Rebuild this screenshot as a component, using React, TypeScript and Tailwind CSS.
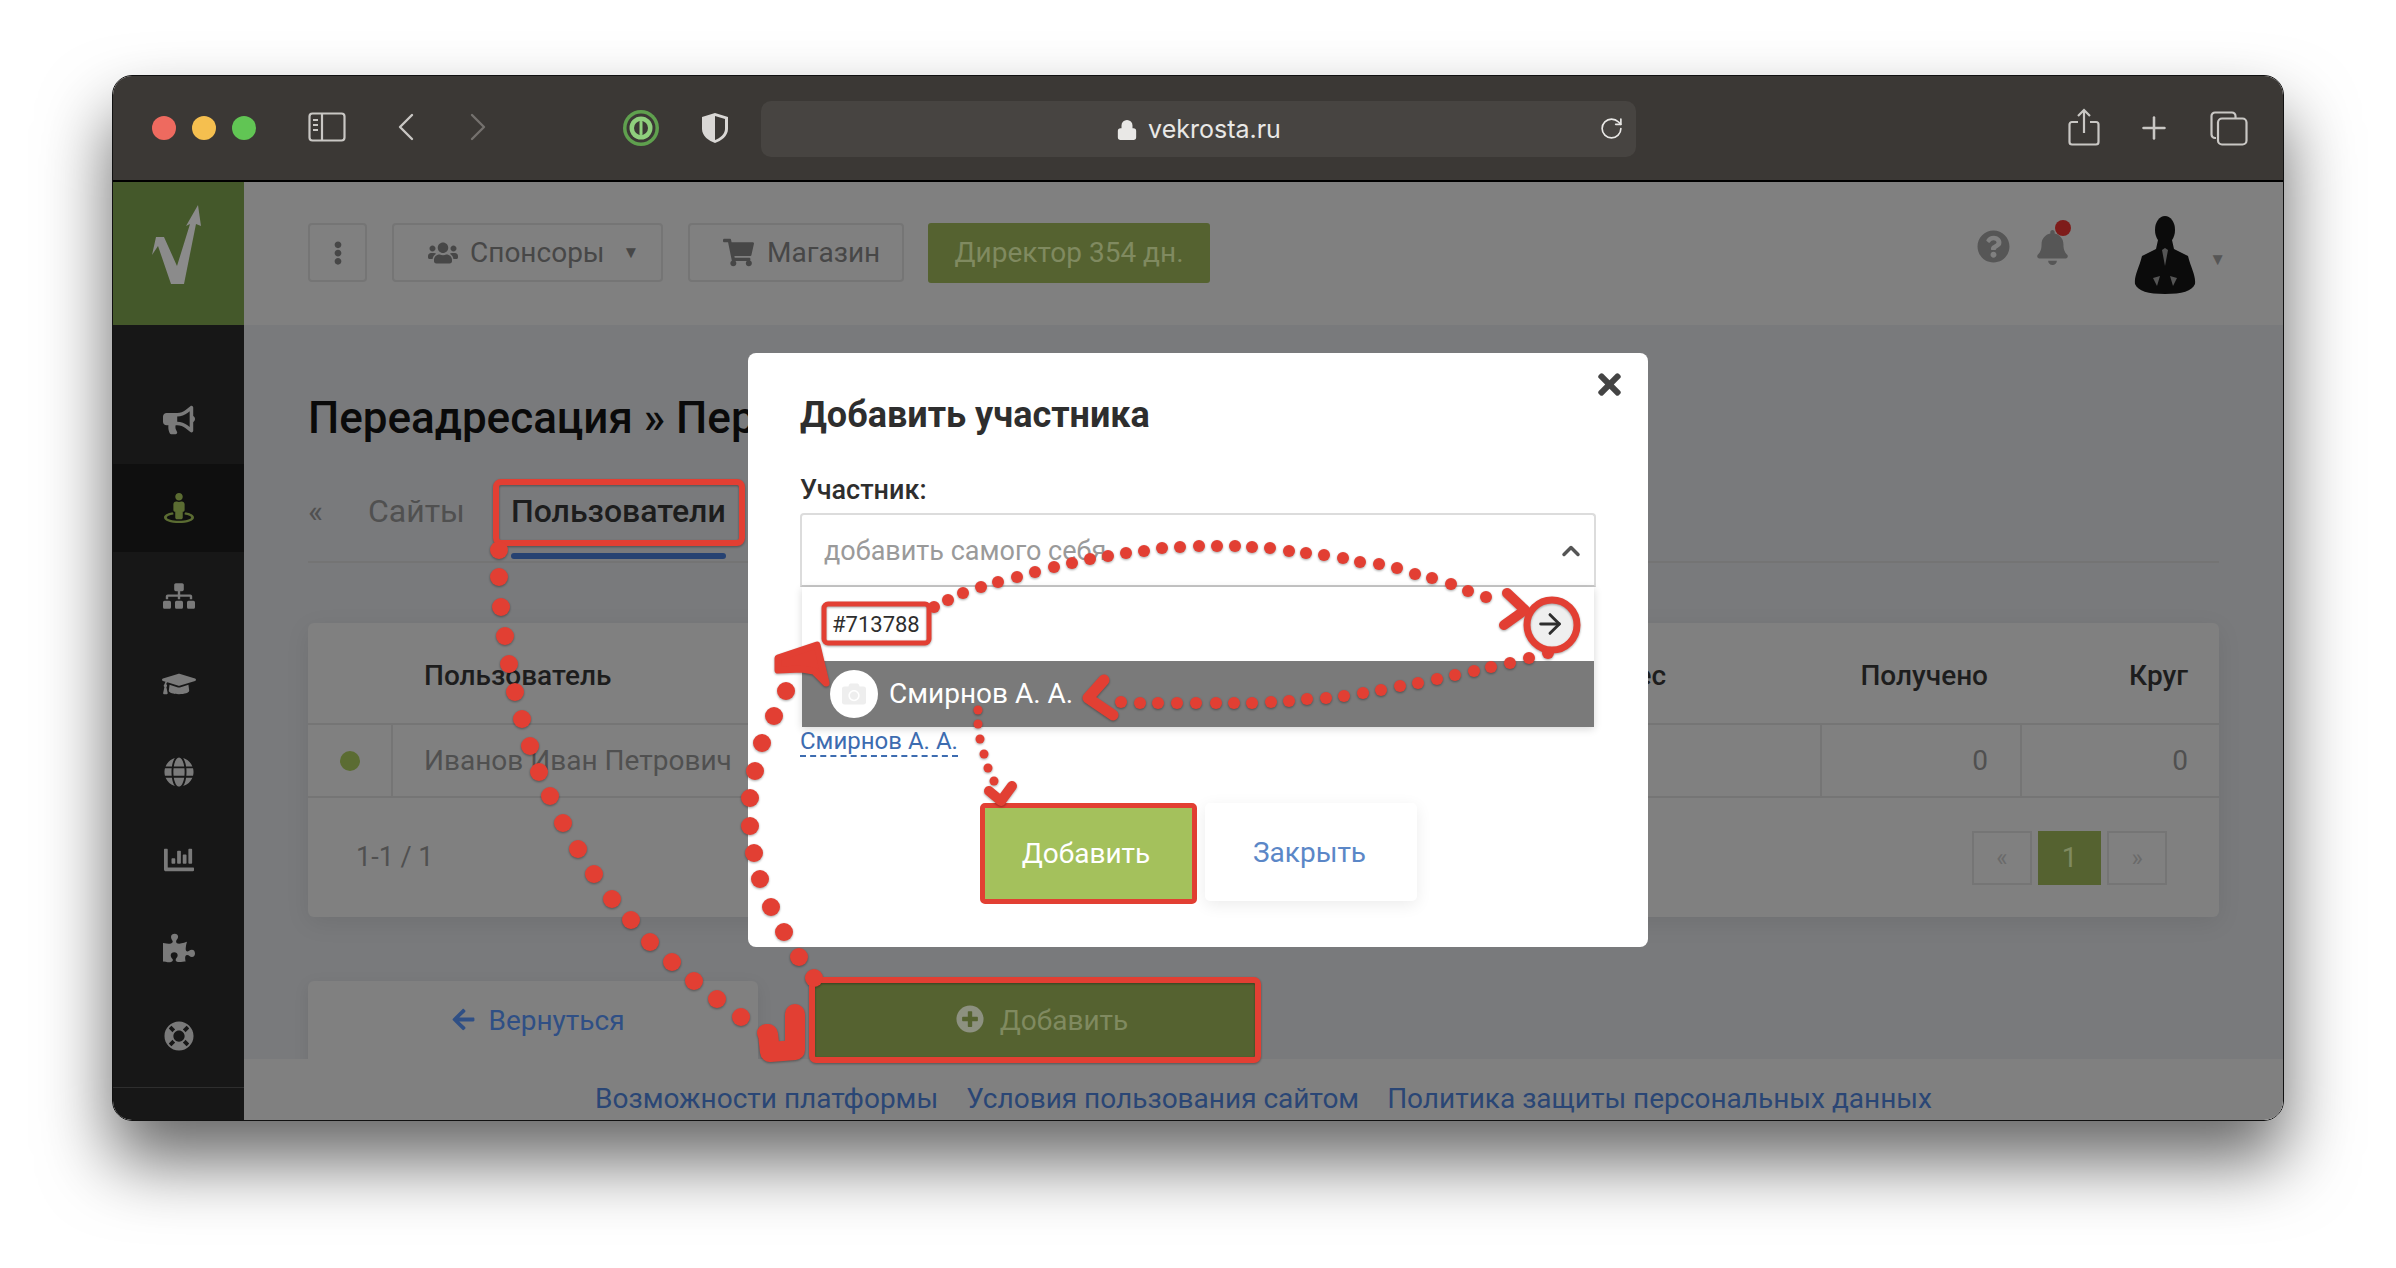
import { ArrowRight, ChevronUp, Lock, Plus, RotateCw } from "lucide-react";
import {
  FaArrowLeft,
  FaBell,
  FaBullhorn,
  FaCamera,
  FaChartBar,
  FaEllipsisV,
  FaGlobe,
  FaGraduationCap,
  FaLifeRing,
  FaPlusCircle,
  FaPuzzlePiece,
  FaQuestionCircle,
  FaShoppingCart,
  FaSitemap,
  FaStreetView,
  FaTimes,
  FaUsers,
} from "react-icons/fa";

const sidebarIcons = [
  { Icon: FaBullhorn, size: 32 },
  { Icon: FaStreetView, size: 30, active: true },
  { Icon: FaSitemap, size: 32 },
  { Icon: FaGraduationCap, size: 34 },
  { Icon: FaGlobe, size: 30 },
  { Icon: FaChartBar, size: 30 },
  { Icon: FaPuzzlePiece, size: 32 },
  { Icon: FaLifeRing, size: 30 },
];

// dotted annotation routes, page coordinates
const bigDots = [
  [499, 550], [499, 577], [501, 607], [505, 636], [509, 664], [515, 692], [522, 719], [530, 746], [539, 772],
  [550, 796], [563, 823], [578, 849], [594, 874], [612, 899], [631, 920], [650, 942], [672, 962], [694, 981],
  [717, 999], [741, 1017], [766, 1033],
  [814, 978], [799, 957], [784, 932], [771, 907], [760, 879], [754, 853], [750, 826], [750, 798], [755, 771],
  [762, 743], [774, 716], [786, 691],
];
const midDots = [
  [934, 607], [948, 600], [963, 593], [981, 587], [998, 582], [1017, 577], [1035, 572], [1054, 567], [1072, 563],
  [1090, 559], [1108, 556], [1126, 553], [1144, 551], [1162, 548], [1180, 547], [1199, 546], [1217, 546], [1235, 546],
  [1252, 547], [1270, 548], [1289, 551], [1306, 553], [1324, 555], [1343, 558], [1360, 562], [1379, 564], [1397, 568],
  [1415, 574], [1432, 578], [1451, 584], [1468, 591], [1486, 597],
  [1548, 653], [1529, 658], [1510, 663], [1491, 667], [1474, 671], [1455, 675], [1437, 679], [1418, 683], [1400, 686],
  [1381, 690], [1363, 693], [1344, 696], [1326, 698], [1307, 699], [1289, 701], [1271, 702], [1252, 703], [1234, 703],
  [1216, 703], [1196, 703], [1177, 703], [1158, 703], [1140, 703], [1121, 702],
];
const smallDots = [
  [978, 710], [978, 724], [980, 739], [984, 754], [988, 768], [994, 781],
];

function Annotations() {
  const red = "#e23f33";
  return (
    <svg
      className="pointer-events-none absolute left-0 top-0 drop-shadow-[0_1px_1px_rgba(0,0,0,0.35)]"
      width="2396"
      height="1268"
      viewBox="0 0 2396 1268"
    >
      <rect x="496" y="482" width="246" height="61" rx="5" fill="none" stroke={red} strokeWidth="6" />
      <rect x="812" y="980" width="446" height="80" rx="4" fill="none" stroke={red} strokeWidth="6" />
      <rect x="824" y="604" width="105" height="39" rx="4" fill="none" stroke={red} strokeWidth="5" />
      <circle cx="1552" cy="625" r="25" fill="none" stroke={red} strokeWidth="7" />
      {bigDots.map(([x, y], i) => (
        <circle key={i} cx={x} cy={y} r="9" fill={red} />
      ))}
      {midDots.map(([x, y], i) => (
        <circle key={i} cx={x} cy={y} r="6" fill={red} />
      ))}
      {smallDots.map(([x, y], i) => (
        <circle key={i} cx={x} cy={y} r="4.5" fill={red} />
      ))}
      <g fill="none" stroke={red} strokeLinecap="round" strokeLinejoin="round">
        <path d="M1507 593 L1525 610 L1504 625" strokeWidth="10" />
        <path d="M1104 680 L1088 698 L1113 715" strokeWidth="11" />
        <path d="M989 791 L1001 801 L1012 786" strokeWidth="10" />
        <path d="M795 1014 L795 1050 L770 1052 L768 1034" strokeWidth="20" />
        <path d="M778 658 L817 645 L826 683 L814 671 L802 669 L778 670 Z" fill={red} strokeWidth="7" />
      </g>
    </svg>
  );
}

function Logo() {
  return (
    <svg className="ml-[-5px]" width="54" height="84" viewBox="0 0 54 84" fill="#8b8b8b">
      <path d="M49 3 L52 24 L47 22 L35 82 L22 82 L9 44 L3 53 L7 35 L15 35 L28 64 L41 22 L37 24 Z" />
    </svg>
  );
}

function Avatar() {
  return (
    <svg width="62" height="78" viewBox="0 0 62 78" fill="#0b0b0b">
      <ellipse cx="31" cy="14" rx="10" ry="14" />
      <path d="M24 24 H38 L40 33 L54 40 C57 52 62 60 61 68 C58 75 48 78 31 78 C14 78 4 75 1 68 C0 60 5 52 8 40 L22 33 Z" />
      <path d="M28 34 L31 50 L34 34 L31 32 Z" fill="#555" />
      <path d="M19 62 L23 70 L26 60 Z M43 62 L39 70 L36 60 Z" fill="#555" />
    </svg>
  );
}

function Toolbar() {
  return (
    <div className="flex h-[106px] shrink-0 items-start border-b-2 border-black bg-[#3b3835] pt-[25px] text-[#c9c7c4]">
      <div className="ml-[39px] mt-[15px] flex w-[104px] items-center justify-between">
        <span className="h-[24px] w-[24px] rounded-full bg-[#ee6a5f]" />
        <span className="h-[24px] w-[24px] rounded-full bg-[#f5bf4f]" />
        <span className="h-[24px] w-[24px] rounded-full bg-[#61c554]" />
      </div>
      <svg className="ml-[52px] mt-[11px]" width="38" height="30" viewBox="0 0 38 30" fill="none" stroke="currentColor" strokeWidth="2.2">
        <rect x="1.5" y="1.5" width="35" height="27" rx="3" />
        <path d="M14 2 V28 M5 8 H10 M5 13 H10 M5 18 H10" />
      </svg>
      <svg className="ml-[52px] mt-[12px]" width="16" height="28" viewBox="0 0 16 28" fill="none" stroke="currentColor" strokeWidth="2.4" strokeLinecap="round" strokeLinejoin="round">
        <path d="M14 2 L2 14 L14 26" />
      </svg>
      <svg className="ml-[56px] mt-[12px] text-[#74716e]" width="16" height="28" viewBox="0 0 16 28" fill="none" stroke="currentColor" strokeWidth="2.4" strokeLinecap="round" strokeLinejoin="round">
        <path d="M2 2 L14 14 L2 26" />
      </svg>
      <svg className="ml-[136px] mt-[8px]" width="38" height="38" viewBox="0 0 38 38" fill="none">
        <circle cx="19" cy="19" r="18" fill="#5fa04e" />
        <circle cx="19" cy="19" r="14.5" fill="#3b3835" />
        <circle cx="19" cy="19" r="11.5" fill="#8fcf7d" />
        <circle cx="19" cy="19" r="7" fill="#3b3835" />
        <rect x="17.5" y="12" width="3" height="14" rx="1" fill="#8fcf7d" />
      </svg>
      <svg className="ml-[41px] mt-[11px]" width="28" height="32" viewBox="0 0 28 32">
        <path d="M14 1 L27 5 V17 C27 24 20 29 14 31 C8 29 1 24 1 17 V5 Z" fill="#d9d7d5" />
        <path d="M14 4 L24 7 V17 C24 22 19 26 14 28 Z" fill="#3b3835" />
      </svg>
      <div className="relative ml-[32px] flex h-[56px] w-[875px] items-center justify-center rounded-[10px] bg-[#474441] pt-[2px] font-['Inter',sans-serif] text-[25px] text-[#e9e8e6]">
        <Lock className="mr-[10px]" size={22} fill="currentColor" strokeWidth={2} />
        vekrosta.ru
        <RotateCw className="absolute right-[12px] top-[15px]" size={25} strokeWidth={1.6} />
      </div>
      <svg className="ml-[432px] mt-[7px]" width="32" height="38" viewBox="0 0 32 38" fill="none" stroke="currentColor" strokeWidth="2.2">
        <path d="M10 14 H4 A2.5 2.5 0 0 0 1.5 16.5 V34 A2.5 2.5 0 0 0 4 36.5 H28 A2.5 2.5 0 0 0 30.5 34 V16.5 A2.5 2.5 0 0 0 28 14 H22" />
        <path d="M16 25 V2 M10 8 L16 2 L22 8" />
      </svg>
      <Plus className="ml-[36px] mt-[9px]" size={36} strokeWidth={1.7} />
      <svg className="ml-[38px] mt-[10px]" width="38" height="35" viewBox="0 0 38 35" fill="none" stroke="currentColor" strokeWidth="2.2">
        <path d="M6 27 H5 A3.5 3.5 0 0 1 1.5 23.5 V5 A3.5 3.5 0 0 1 5 1.5 H22 A3.5 3.5 0 0 1 25.5 5 V7" />
        <rect x="8" y="7.5" width="28.5" height="26" rx="4" />
      </svg>
    </div>
  );
}

function Sidebar() {
  return (
    <aside className="flex w-[131px] shrink-0 flex-col bg-[#171717]">
      <div className="flex h-[143px] items-start justify-center bg-[#44582a] pt-[20px]">
        <Logo />
      </div>
      <nav className="flex flex-col pt-[51px]">
        {sidebarIcons.map(({ Icon, size, active }, i) => (
          <div
            key={i}
            className={
              active
                ? "flex h-[88px] items-center justify-center bg-[#0f0f0f] text-[#5b6c32]"
                : "flex h-[88px] items-center justify-center text-[#7a7a7a]"
            }
          >
            <Icon size={size} />
          </div>
        ))}
      </nav>
      <div className="mt-[7px] border-t border-[#2e2e2e]" />
    </aside>
  );
}

function TopBar() {
  return (
    <header className="flex h-[143px] shrink-0 items-start bg-[#808080] pl-[64px] pr-[57px] pt-[41px] text-[28px] text-[#474747]">
      <div className="flex h-[59px] w-[59px] items-center justify-center rounded-[4px] border-2 border-[#757575]">
        <FaEllipsisV size={24} />
      </div>
      <div className="ml-[25px] flex h-[59px] w-[271px] items-center rounded-[4px] border-2 border-[#757575] pl-[34px]">
        <FaUsers size={30} />
        <span className="ml-[12px]">Спонсоры</span>
        <span className="ml-[18px] text-[17px]">▼</span>
      </div>
      <div className="ml-[25px] flex h-[59px] w-[216px] items-center rounded-[4px] border-2 border-[#757575] pl-[33px]">
        <FaShoppingCart size={31} />
        <span className="ml-[13px]">Магазин</span>
      </div>
      <div className="ml-[24px] flex h-[60px] w-[282px] items-center justify-center rounded-[3px] bg-[#556230] text-[#808a60]">
        Директор 354 дн.
      </div>
      <FaQuestionCircle className="ml-auto mt-[7px] text-[#565656]" size={33} />
      <div className="relative ml-[25px] mt-[7px]">
        <FaBell className="text-[#565656]" size={35} />
        <span className="absolute left-[20px] top-[-10px] h-[16px] w-[16px] rounded-full bg-[#7e1c1a]" />
      </div>
      <div className="ml-[64px] mt-[-7px]">
        <Avatar />
      </div>
      <span className="ml-[13px] mt-[24px] text-[17px] text-[#565656]">▼</span>
    </header>
  );
}

function UsersTable() {
  return (
    <section className="mt-[60px] h-[294px] rounded-[6px] bg-[#808080] shadow-[0_6px_24px_rgba(0,0,0,0.08)]">
      <div className="grid h-[100px] grid-cols-[83px_1170px_259px_200px_201px] items-center pt-[6px] text-[28px] font-medium text-[#1d1d1d]">
        <div />
        <div className="pl-[33px]">Пользователь</div>
        <div className="pl-[24px]">Адрес</div>
        <div className="pr-[32px] text-right">Получено</div>
        <div className="pr-[33px] text-right">Круг</div>
      </div>
      <div className="grid h-[75px] grid-cols-[83px_1170px_259px_200px_201px] border-y-2 border-[#757575] text-[28px] text-[#505050]">
        <div className="flex items-center justify-center">
          <span className="h-[20px] w-[20px] rounded-full bg-[#5b6c32]" />
        </div>
        <div className="flex items-center border-l-2 border-[#757575] pl-[31px]">Иванов Иван Петрович</div>
        <div />
        <div className="flex items-center justify-end border-l-2 border-[#757575] pr-[32px]">0</div>
        <div className="flex items-center justify-end border-l-2 border-[#757575] pr-[33px]">0</div>
      </div>
      <div className="flex h-[119px] items-start justify-between pl-[48px] pr-[52px] pt-[33px] text-[27px] text-[#505050]">
        <span className="mt-[6px]">1-1 / 1</span>
        <div className="flex gap-[6px] text-[24px]">
          <span className="flex h-[54px] w-[60px] items-center justify-center border-2 border-[#757575] text-[#6a6a6a]">«</span>
          <span className="flex h-[54px] w-[63px] items-center justify-center bg-[#556230] text-[28px] text-[#808a60]">1</span>
          <span className="flex h-[54px] w-[60px] items-center justify-center border-2 border-[#757575] text-[#6a6a6a]">»</span>
        </div>
      </div>
    </section>
  );
}

function PageBody() {
  return (
    <main className="min-h-0 flex-1 overflow-hidden bg-[#797a7c] px-[64px] pt-[69px]">
      <h1 className="text-[44px] font-medium leading-[48px] text-[#0a0a0a]">Переадресация » Переадресация</h1>
      <div className="mt-[39px] flex h-[82px] items-start border-b-2 border-[#747474] pt-[10px] text-[32px] leading-[40px]">
        <span className="text-[#505050]">«</span>
        <span className="ml-[45px] text-[#505050]">Сайты</span>
        <span className="ml-[46px] flex h-[72px] flex-col font-medium text-[#1d1d1d]">
          Пользователи
          <span className="mt-[22px] h-[6px] rounded-[3px] bg-[#264272]" />
        </span>
      </div>
      <UsersTable />
      <div className="mt-[64px] flex h-[90px] gap-[56px] text-[28px]">
        <button className="flex h-full w-[450px] items-start justify-center rounded-[6px] bg-[#808080] pl-[10px] pt-[19px] text-[#2f4f85] shadow-[0_4px_16px_rgba(0,0,0,0.08)]">
          <FaArrowLeft className="mr-[12px] mt-[7px]" size={25} />
          Вернуться
        </button>
        <button className="flex h-full w-[442px] items-start justify-center bg-[#556230] pl-[14px] pt-[19px] text-[#808a60]">
          <FaPlusCircle className="mr-[16px] mt-[5px] text-[#8d9180]" size={28} />
          Добавить
        </button>
      </div>
    </main>
  );
}

function AddMemberModal() {
  return (
    <div className="absolute left-[748px] top-[353px] h-[594px] w-[900px] rounded-[8px] bg-white px-[52px] pt-[42px]">
      <FaTimes className="absolute right-[22px] top-[15px] text-[#444]" size={33} />
      <h2 className="text-[36px] font-bold leading-[40px] text-[#2e2e2e]">Добавить участника</h2>
      <div className="mt-[39px] text-[27px] font-medium leading-[32px] text-[#2e2e2e]">Участник:</div>
      <div className="mt-[7px] flex h-[74px] items-center justify-between rounded-t-[4px] border-2 border-[#dcdcdc] border-b-[#c8c8c8] pl-[22px] pr-[9px] pt-[2px] text-[27px] text-[#9a9a9a]">
        добавить самого себя
        <ChevronUp className="text-[#555]" size={28} strokeWidth={3} />
      </div>
      <div className="mx-[2px] shadow-[0_2px_8px_rgba(0,0,0,0.16)]">
        <div className="flex h-[74px] items-center justify-between pl-[30px] pr-[21px] text-[22px] text-[#2e2e2e]">
          #713788
          <span className="flex h-[46px] w-[46px] items-center justify-center rounded-full bg-[#efefef]">
            <ArrowRight size={32} strokeWidth={2.2} />
          </span>
        </div>
        <div className="flex h-[66px] items-center bg-[#7a7a7a] pl-[28px] text-[28px] text-white">
          <span className="flex h-[48px] w-[48px] items-center justify-center rounded-full bg-white">
            <FaCamera className="text-[#eeeeee]" size={24} />
          </span>
          <span className="ml-[11px]">Смирнов А. А.</span>
        </div>
      </div>
      <a className="inline-block border-b-2 border-dashed border-[#3d6cb0] text-[24px] leading-[28px] text-[#3d6cb0]">Смирнов А. А.</a>
      <div className="mt-[46px] flex items-start justify-center gap-[8px] text-[28px]">
        <button className="h-[101px] w-[217px] rounded-[5px] border-[5px] border-[#e23f33] bg-[#a4c15c] pr-[4px] text-white">Добавить</button>
        <button className="h-[98px] w-[212px] rounded-[5px] bg-white pr-[2px] pt-[2px] text-[#5b87c7] shadow-[0_4px_16px_rgba(0,0,0,0.08)]">Закрыть</button>
      </div>
    </div>
  );
}

export default function App() {
  return (
    <div className="relative h-[1268px] w-[2396px] overflow-hidden bg-white pl-[112px] pt-[75px] font-['Roboto',sans-serif]">
      <div className="flex h-[1046px] w-[2172px] flex-col overflow-hidden rounded-[20px] border border-[#111] shadow-[0_40px_70px_rgba(0,0,0,0.6)]">
        <Toolbar />
        <div className="flex min-h-0 flex-1">
          <Sidebar />
          <div className="flex min-w-0 flex-1 flex-col">
            <TopBar />
            <PageBody />
            <footer className="flex h-[61px] shrink-0 items-center justify-center gap-[28px] bg-[#808080] pt-[18px] text-[28px] text-[#2a4675]">
              <span>Возможности платформы</span>
              <span>Условия пользования сайтом</span>
              <span>Политика защиты персональных данных</span>
            </footer>
          </div>
        </div>
      </div>
      <AddMemberModal />
      <Annotations />
    </div>
  );
}
